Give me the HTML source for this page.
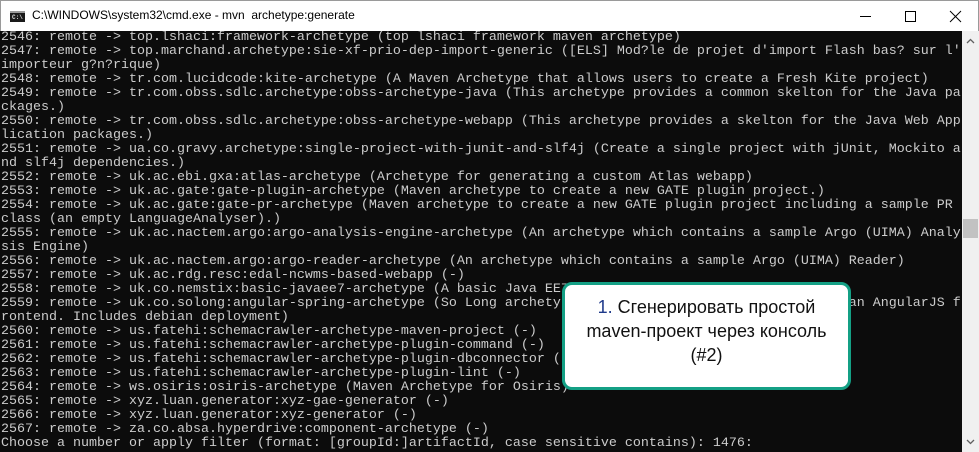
<!DOCTYPE html>
<html><head><meta charset="utf-8">
<style>
*{margin:0;padding:0;box-sizing:border-box}
html,body{width:979px;height:452px;overflow:hidden;background:#fff}
#title{position:absolute;left:0;top:0;width:979px;height:31px;background:#fff;border:1px solid #9a9a9a;border-bottom:none}
#title .t{position:absolute;left:31px;top:7px;font:12px "Liberation Sans",sans-serif;color:#000}
#icon{position:absolute;left:9px;top:10px;width:15px;height:11px;background:#1a1a1a;border-top:2px solid #9a9a9a}
#icon span{position:absolute;left:2px;top:2px;font:bold 6px "Liberation Mono",monospace;color:#ddd;line-height:6px}
#con{position:absolute;left:0;top:31px;width:962px;height:421px;background:#0c0c0c;overflow:hidden}
.r{position:absolute;left:1px;white-space:pre;font:13.33px/14px "Liberation Mono",monospace;color:#cccccc}
#sb{position:absolute;left:962px;top:31px;width:17px;height:421px;background:#f0f0f0}
#thumb{position:absolute;left:1px;top:188px;width:15px;height:19px;background:#c2c2c2}
#call{position:absolute;left:562px;top:282px;width:289px;height:108px;background:#fff;border:3px solid #14a085;border-radius:10px;text-align:center;font:18px/24px "Liberation Sans","Noto Sans CJK SC",sans-serif;color:#111;padding-top:10px}
</style></head><body>
<div id="title"><div id="icon"><span>C:\</span></div><div class="t">C:\WINDOWS\system32\cmd.exe - mvn &nbsp;archetype:generate</div>
<svg style="position:absolute;left:850px;top:0" width="129" height="31">
<line x1="9" y1="15.5" x2="20" y2="15.5" stroke="#000" stroke-width="1"/>
<rect x="54.5" y="10.5" width="10" height="10" fill="none" stroke="#000"/>
<line x1="99" y1="10" x2="110" y2="21" stroke="#000"/><line x1="110" y1="10" x2="99" y2="21" stroke="#000"/>
</svg></div>
<div id="con">
<div class="r" style="top:0px">2546: remote -> top.lshaci:framework-archetype (top lshaci framework maven archetype)</div>
<div class="r" style="top:14px">2547: remote -> top.marchand.archetype:sie-xf-prio-dep-import-generic ([ELS] Mod?le de projet d'import Flash bas? sur l'</div>
<div class="r" style="top:28px">importeur g?n?rique)</div>
<div class="r" style="top:42px">2548: remote -> tr.com.lucidcode:kite-archetype (A Maven Archetype that allows users to create a Fresh Kite project)</div>
<div class="r" style="top:56px">2549: remote -> tr.com.obss.sdlc.archetype:obss-archetype-java (This archetype provides a common skelton for the Java pa</div>
<div class="r" style="top:70px">ckages.)</div>
<div class="r" style="top:84px">2550: remote -> tr.com.obss.sdlc.archetype:obss-archetype-webapp (This archetype provides a skelton for the Java Web App</div>
<div class="r" style="top:98px">lication packages.)</div>
<div class="r" style="top:112px">2551: remote -> ua.co.gravy.archetype:single-project-with-junit-and-slf4j (Create a single project with jUnit, Mockito a</div>
<div class="r" style="top:126px">nd slf4j dependencies.)</div>
<div class="r" style="top:140px">2552: remote -> uk.ac.ebi.gxa:atlas-archetype (Archetype for generating a custom Atlas webapp)</div>
<div class="r" style="top:154px">2553: remote -> uk.ac.gate:gate-plugin-archetype (Maven archetype to create a new GATE plugin project.)</div>
<div class="r" style="top:168px">2554: remote -> uk.ac.gate:gate-pr-archetype (Maven archetype to create a new GATE plugin project including a sample PR</div>
<div class="r" style="top:182px">class (an empty LanguageAnalyser).)</div>
<div class="r" style="top:196px">2555: remote -> uk.ac.nactem.argo:argo-analysis-engine-archetype (An archetype which contains a sample Argo (UIMA) Analy</div>
<div class="r" style="top:210px">sis Engine)</div>
<div class="r" style="top:224px">2556: remote -> uk.ac.nactem.argo:argo-reader-archetype (An archetype which contains a sample Argo (UIMA) Reader)</div>
<div class="r" style="top:238px">2557: remote -> uk.ac.rdg.resc:edal-ncwms-based-webapp (-)</div>
<div class="r" style="top:252px">2558: remote -> uk.co.nemstix:basic-javaee7-archetype (A basic Java EE7 Maven archetype)</div>
<div class="r" style="top:266px">2559: remote -> uk.co.solong:angular-spring-archetype (So Long archetype for RESTful spring services with an AngularJS f</div>
<div class="r" style="top:280px">rontend. Includes debian deployment)</div>
<div class="r" style="top:294px">2560: remote -> us.fatehi:schemacrawler-archetype-maven-project (-)</div>
<div class="r" style="top:308px">2561: remote -> us.fatehi:schemacrawler-archetype-plugin-command (-)</div>
<div class="r" style="top:322px">2562: remote -> us.fatehi:schemacrawler-archetype-plugin-dbconnector (-)</div>
<div class="r" style="top:336px">2563: remote -> us.fatehi:schemacrawler-archetype-plugin-lint (-)</div>
<div class="r" style="top:350px">2564: remote -> ws.osiris:osiris-archetype (Maven Archetype for Osiris)</div>
<div class="r" style="top:364px">2565: remote -> xyz.luan.generator:xyz-gae-generator (-)</div>
<div class="r" style="top:378px">2566: remote -> xyz.luan.generator:xyz-generator (-)</div>
<div class="r" style="top:392px">2567: remote -> za.co.absa.hyperdrive:component-archetype (-)</div>
<div class="r" style="top:406px">Choose a number or apply filter (format: [groupId:]artifactId, case sensitive contains): 1476:</div>
</div>
<div id="sb">
<svg style="position:absolute;left:4px;top:7px" width="9" height="6"><polyline points="1,5 4.5,1.5 8,5" fill="none" stroke="#606060" stroke-width="1.3"/></svg>
<div id="thumb"></div>
<svg style="position:absolute;left:4px;top:408px" width="9" height="6"><polyline points="1,1 4.5,4.5 8,1" fill="none" stroke="#606060" stroke-width="1.3"/></svg>
</div>
<div id="call"><span style="color:#1f3a8a">1.</span> Сгенерировать простой<br>maven-проект через консоль<br>(#2)</div>
</body></html>
